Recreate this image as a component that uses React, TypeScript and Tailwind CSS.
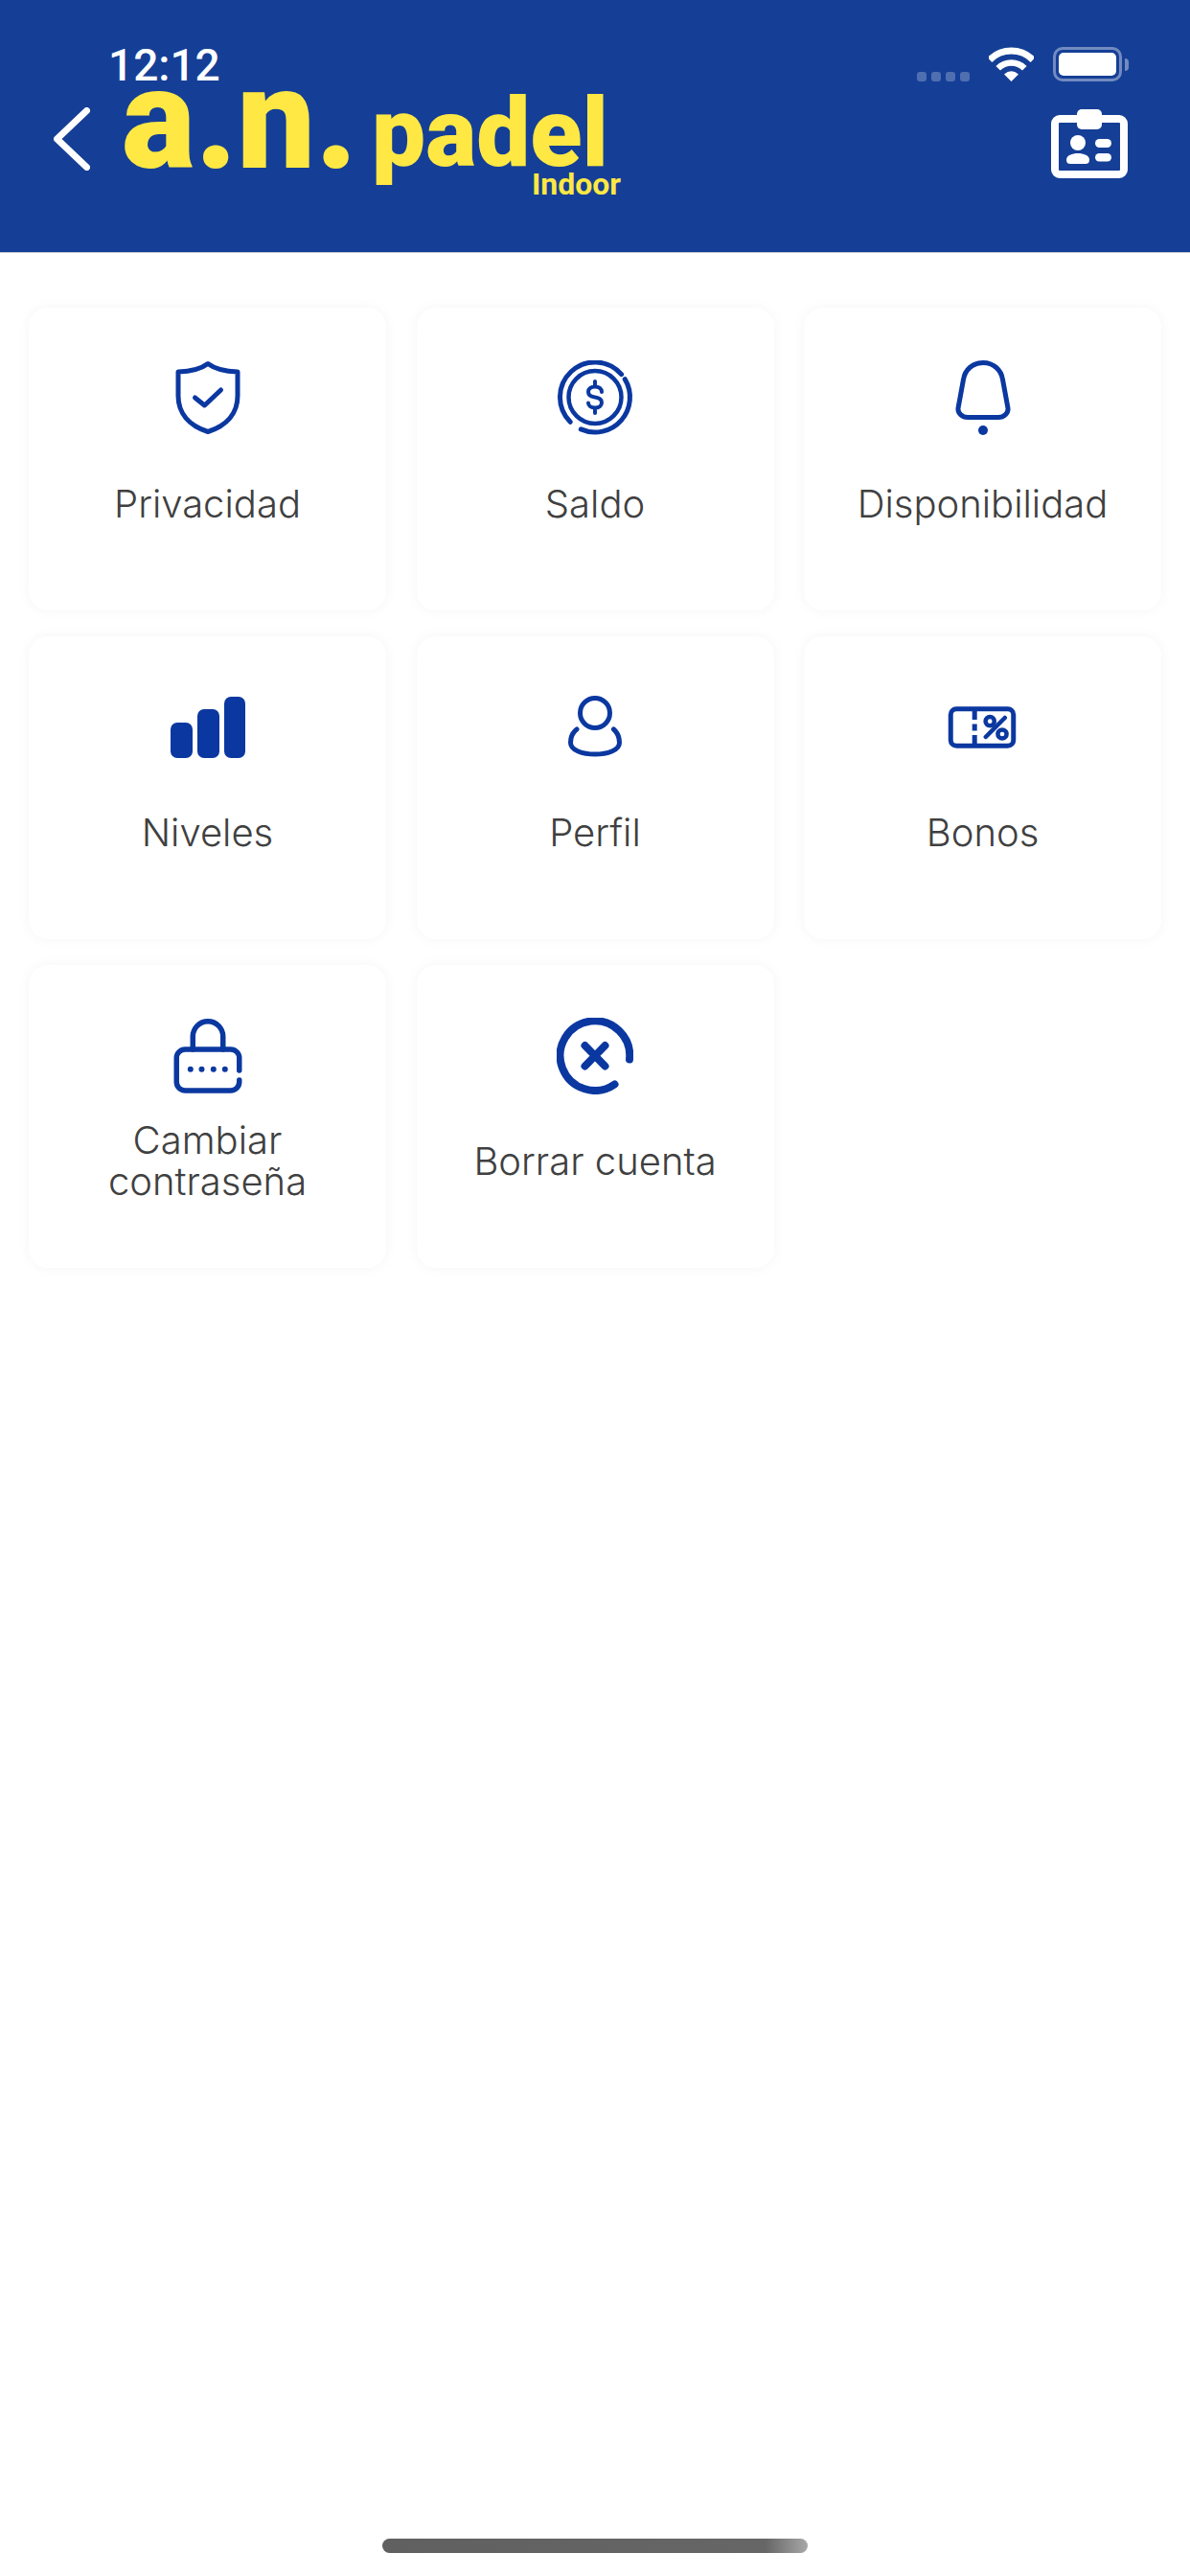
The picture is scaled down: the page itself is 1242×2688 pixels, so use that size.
import type { ReactNode } from 'react';

const BLUE = '#0b38a0';

const ShieldIcon = () => (
  <svg viewBox="0 0 80 80" className="w-[80px] h-[80px]" fill="none" stroke={BLUE} strokeWidth={5} strokeLinecap="round" strokeLinejoin="round">
    <path d="M40 3.5C46 8 54 11.5 71 12V37C71 55 60 68 40 74.5C20 68 9 55 9 37V12C26 11.5 34 8 40 3.5Z" />
    <path d="M26.5 39L36.5 47L53.5 31" />
  </svg>
);

const CoinIcon = () => (
  <svg viewBox="0 0 80 80" className="w-[80px] h-[80px]" fill="none" stroke={BLUE} strokeWidth={5} strokeLinecap="round" strokeLinejoin="round">
    <path d="M14.2 64.3A36.5 36.5 0 1 1 67.6 14.6" />
    <path d="M71.2 19.6A36.5 36.5 0 0 1 25.3 71.9" />
    <circle cx="40" cy="38.5" r="27.5" strokeWidth={4.5} />
    <path d="M47 33C47 29.5 44 27.5 40 27.5C36 27.5 33 29.5 33 33C33 36.5 36 38 40 38.5C44 39 47 40.5 47 44C47 47.5 44 49.5 40 49.5C36 49.5 33 47.5 33 44.5M40 22V27M40 50V55" strokeWidth={4} />
  </svg>
);

const BellIcon = () => (
  <svg viewBox="0 0 80 80" className="w-[80px] h-[80px]" fill="none" stroke={BLUE} strokeWidth={5} strokeLinejoin="round">
    <path d="M40 2.5C51 2.5 59 10 60.5 20L66 50C66.5 55 62 59.5 56 59.5H24C18 59.5 13.5 55 14 50L19.5 20C21 10 29 2.5 40 2.5Z" />
    <circle cx="40" cy="73" r="5" fill={BLUE} stroke="none" />
  </svg>
);

const BarsIcon = () => (
  <svg viewBox="0 0 80 80" className="w-[80px] h-[80px]" fill={BLUE}>
    <rect x="1" y="35" width="23" height="37" rx="7" />
    <rect x="29" y="21" width="23" height="51" rx="7" />
    <rect x="57" y="8" width="22" height="64" rx="7" />
  </svg>
);

const UserIcon = () => (
  <svg viewBox="0 0 80 80" className="w-[80px] h-[80px]" fill="none" stroke={BLUE} strokeWidth={5} strokeLinecap="round">
    <circle cx="40" cy="25" r="15.5" />
    <path d="M21 42C17 45 14.5 50 14.5 56C14.5 64 27 68 40 68C53 68 65.5 64 65.5 56C65.5 50 63 45 59.5 42" />
  </svg>
);

const TicketIcon = () => (
  <svg viewBox="0 0 80 80" className="w-[80px] h-[80px]" fill="none" stroke={BLUE} strokeWidth={5} strokeLinecap="round">
    <rect x="6.25" y="20.75" width="65.5" height="38.5" rx="6" />
    <path d="M31.2 22V32M31.2 36.5V43.5M31.2 48V58" strokeLinecap="butt" />
    <circle cx="47.2" cy="33.7" r="4.6" strokeWidth={4.5} />
    <circle cx="60" cy="47" r="4.6" strokeWidth={4.5} />
    <path d="M62.8 30L42.8 50" strokeWidth={4.5} />
  </svg>
);

const LockIcon = () => (
  <svg viewBox="0 0 80 80" className="w-[80px] h-[80px]" fill="none" stroke={BLUE} strokeWidth={5.5} strokeLinecap="round">
    <path d="M72.75 55V42A9 9 0 0 0 63.75 33H16.25A9 9 0 0 0 7.25 42V67A9 9 0 0 0 16.25 76H63.75A9 9 0 0 0 72.75 67V65" />
    <path d="M24.25 33V19.5A15.75 15.75 0 0 1 55.75 19.5V33" />
    <g fill={BLUE} stroke="none">
      <circle cx="21.8" cy="53.7" r="3" />
      <circle cx="33.5" cy="53.7" r="3" />
      <circle cx="45.8" cy="53.7" r="3" />
      <circle cx="57.8" cy="53.7" r="3" />
    </g>
  </svg>
);

const DeleteIcon = () => (
  <svg viewBox="0 0 80 80" className="w-[80px] h-[80px]" fill="none" stroke={BLUE} strokeWidth={8} strokeLinecap="round">
    <path d="M76 43.5A36.3 36.3 0 1 0 60.5 69.5" />
    <path d="M29.5 29L50.5 50.5M50.5 29L29.5 50.5" />
  </svg>
);

const items: { label: ReactNode; icon: ReactNode }[] = [
  { label: 'Privacidad', icon: <ShieldIcon /> },
  { label: 'Saldo', icon: <CoinIcon /> },
  { label: 'Disponibilidad', icon: <BellIcon /> },
  { label: 'Niveles', icon: <BarsIcon /> },
  { label: 'Perfil', icon: <UserIcon /> },
  { label: 'Bonos', icon: <TicketIcon /> },
  { label: <>Cambiar<br />contraseña</>, icon: <LockIcon /> },
  { label: 'Borrar cuenta', icon: <DeleteIcon /> },
];

const StatusBar = () => (
  <div className="flex items-start justify-between pt-[48px] pl-[113px] pr-[64px] h-[97px]">
    <span className="font-['Roboto',sans-serif] font-medium text-[46px] leading-[41px] text-white">12:12</span>
    <div className="flex items-end pt-[1px]">
      <div className="flex gap-[5px] mr-[20px]">
        <span className="w-[10px] h-[10px] rounded-[3px] bg-white/25" />
        <span className="w-[10px] h-[10px] rounded-[3px] bg-white/25" />
        <span className="w-[10px] h-[10px] rounded-[3px] bg-white/25" />
        <span className="w-[10px] h-[10px] rounded-[3px] bg-white/25" />
      </div>
      <svg viewBox="0 0 47 36" className="w-[47px] h-[36px] mr-[20px]" fill="none" stroke="#fff">
        <path d="M0.9 13.4A32 32 0 0 1 46.1 13.4" strokeWidth={7} />
        <path d="M9.7 22.2A19.5 19.5 0 0 1 37.3 22.2" strokeWidth={6.5} />
        <path d="M23.5 36L16 28.5Q23.5 22 31 28.5Z" fill="#fff" stroke="none" />
      </svg>
      <div className="flex items-center gap-[3px]">
        <div className="w-[72px] h-[36px] rounded-[10px] border-[3px] border-white/40 p-[3px]">
          <div className="w-full h-full rounded-[5px] bg-white" />
        </div>
        <div className="w-[4px] h-[13px] rounded-r-[4px] bg-white/40" />
      </div>
    </div>
  </div>
);

const Logo = () => (
  <svg viewBox="0 0 523 107" className="w-[523px] h-[107px] ml-[33px] overflow-visible">
    <text x="0" y="78" textLength={246} lengthAdjust="spacingAndGlyphs" className="font-['Roboto',sans-serif] font-black fill-[#ffe843] text-[148px]">a.n.</text>
    <text x="261" y="76" textLength={247} lengthAdjust="spacingAndGlyphs" className="font-['Roboto',sans-serif] font-black fill-[#ffe843] text-[100px]">padel</text>
    <text x="428" y="106" textLength={93} lengthAdjust="spacingAndGlyphs" className="font-['Roboto',sans-serif] font-bold fill-[#ffe843] text-[32px]">Indoor</text>
  </svg>
);

const NavBar = () => (
  <div className="flex items-start pl-[56px] pr-[65px]">
    <svg viewBox="0 0 38 66" className="w-[38px] h-[66px] mt-[15px]" fill="none" stroke="#fff" strokeWidth={7} strokeLinecap="round" strokeLinejoin="round">
      <path d="M34.5 3.5L3.5 33L34.5 62.5" />
    </svg>
    <Logo />
    <svg viewBox="0 0 80 72" className="w-[80px] h-[72px] mt-[17px] ml-auto" fill="#fff">
      <rect x="4" y="10" width="72" height="58" rx="5" fill="none" stroke="#fff" strokeWidth={8} />
      <rect x="27" y="0" width="26" height="21" rx="5" />
      <circle cx="28" cy="35" r="8" />
      <path d="M16 53C16 48 22 46 28 46C34 46 40 48 40 53C40 56 38 57 36 57H20C18 57 16 56 16 53Z" />
      <rect x="46" y="31" width="17" height="9" rx="4.5" />
      <rect x="46" y="46" width="17" height="8.5" rx="4.25" />
    </svg>
  </div>
);

export default function App() {
  return (
    <div className="flex flex-col w-[1242px] h-[2688px] bg-white font-['Inter',sans-serif]">
      <header className="h-[264px] bg-[#153f96] border-b border-[#c4c8d0]">
        <StatusBar />
        <NavBar />
      </header>

      <main className="grid grid-cols-3 gap-x-[31.5px] gap-y-[27px] px-[30px] pt-[57px]">
        {items.map((item, index) => (
          <div
            key={index}
            className="flex flex-col items-center h-[316px] pt-[55px] rounded-[20px] bg-white shadow-[0_0_14px_rgba(0,0,0,0.045)]"
          >
            {item.icon}
            <div className="flex items-center justify-center h-[86px] mt-[26px] text-center text-[40px] leading-[43px] font-light text-[#404040]">
              <span>{item.label}</span>
            </div>
          </div>
        ))}
      </main>

      {/* Home indicator */}
      <div className="mt-auto mb-[24px] mx-auto w-[444px] h-[15px] rounded-full bg-gradient-to-r from-[#606060] via-[#666666] via-90% to-[#a8a8a8]" />
    </div>
  );
}
